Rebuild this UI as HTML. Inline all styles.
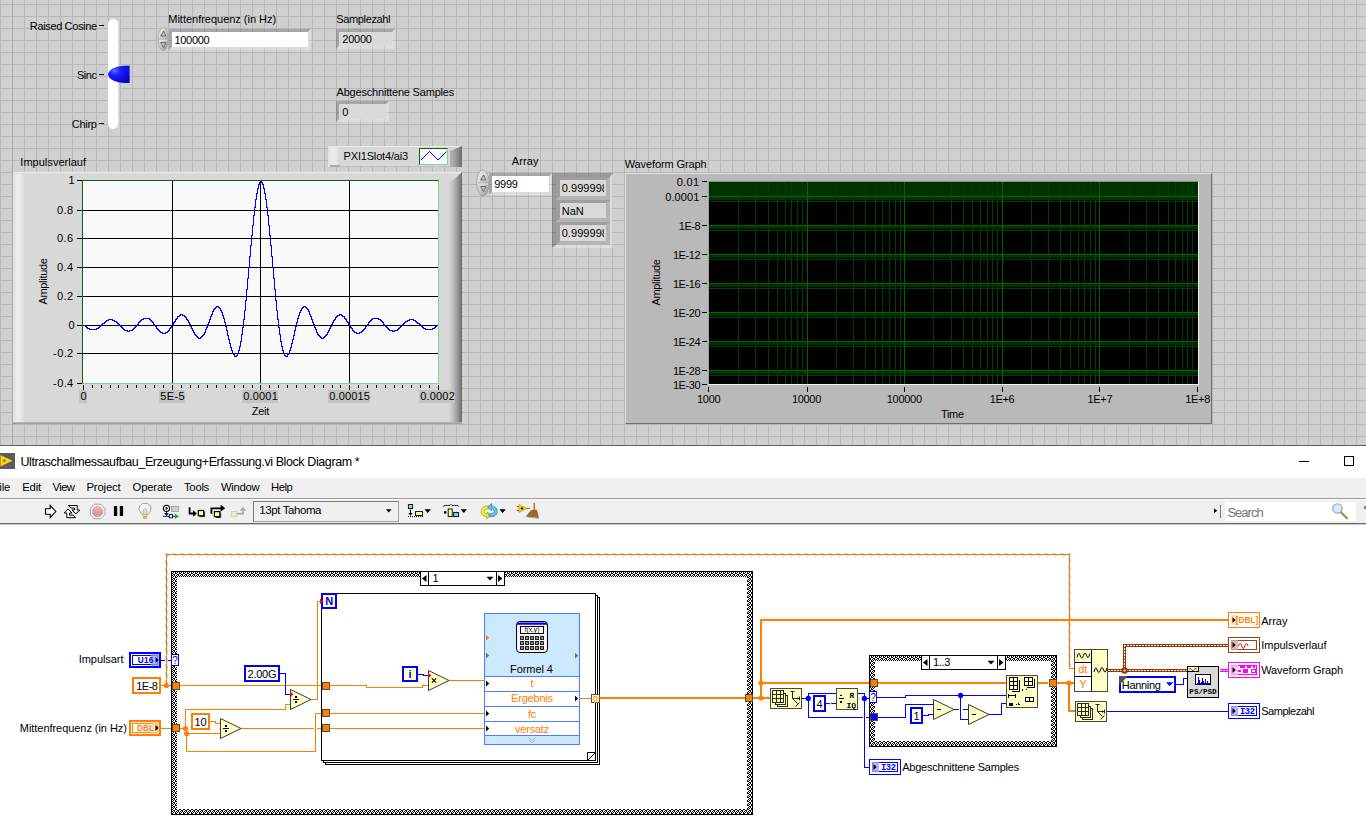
<!DOCTYPE html>
<html><head><meta charset="utf-8"><title>Ultraschallmessaufbau</title>
<style>
html,body{margin:0;padding:0;}
body{width:1366px;height:827px;overflow:hidden;position:relative;background:#fff;font-family:"Liberation Sans",sans-serif;font-size:11px;color:#000;}
#fp{position:absolute;left:0;top:0;width:1366px;height:445px;background-color:#d0d0d0;
background-image:linear-gradient(to right,#b7b7b7 1px,transparent 1px),linear-gradient(to bottom,#b7b7b7 1px,transparent 1px);
background-size:12px 12px;background-position:0 4px;overflow:hidden;}
svg{position:absolute;left:0;top:0;}
svg text{font-family:"Liberation Sans",sans-serif;}
.bev{position:absolute;box-sizing:border-box;border-style:solid;border-width:3px;border-color:rgba(0,0,0,.2) rgba(255,255,255,.28) rgba(255,255,255,.28) rgba(0,0,0,.2);}
</style></head><body>
<div id="fp">
<div style="position:absolute;left:12px;top:0px;width:1px;height:445px;background:#a8a8a8;"></div>
<div style="position:absolute;left:108px;top:19px;width:10px;height:110px;background:#fff;border-radius:5px;box-shadow:1px 0 0 #dcdcdc;"></div>
<div style="position:absolute;top:18.99px;font-size:11px;line-height:14px;color:#000;white-space:pre;letter-spacing:-0.364px;right:1269.34px;">Raised Cosine</div>
<div style="position:absolute;left:99px;top:25px;width:5px;height:1px;background:#000;"></div>
<div style="position:absolute;top:67.99px;font-size:11px;line-height:14px;color:#000;white-space:pre;letter-spacing:-0.400px;right:1269.30px;">Sinc</div>
<div style="position:absolute;left:99px;top:74px;width:5px;height:1px;background:#000;"></div>
<div style="position:absolute;top:116.99px;font-size:11px;line-height:14px;color:#000;white-space:pre;letter-spacing:-0.297px;right:1269.40px;">Chirp</div>
<div style="position:absolute;left:99px;top:123px;width:5px;height:1px;background:#000;"></div>
<div style="position:absolute;top:12.19px;font-size:11px;line-height:14px;color:#000;white-space:pre;letter-spacing:-0.018px;left:168.3px;">Mittenfrequenz (in Hz)</div>
<div class="bev" style="left:169px;top:29px;width:142px;height:21px;background:#fff;background-clip:padding-box;"></div>
<div style="position:absolute;top:32.99px;font-size:11px;line-height:14px;color:#000;white-space:pre;letter-spacing:-0.317px;left:174.5px;">100000</div>
<div style="position:absolute;top:12.49px;font-size:11px;line-height:14px;color:#000;white-space:pre;letter-spacing:-0.367px;left:336.3px;">Samplezahl</div>
<div class="bev" style="left:336px;top:29px;width:59px;height:20px;background:#d9d9d9;background-clip:padding-box;"></div>
<div style="position:absolute;top:32.39px;font-size:11px;line-height:14px;color:#000;white-space:pre;letter-spacing:-0.257px;left:342.3px;">20000</div>
<div style="position:absolute;top:85.49px;font-size:11px;line-height:14px;color:#000;white-space:pre;letter-spacing:-0.185px;left:336.5px;">Abgeschnittene Samples</div>
<div class="bev" style="left:336px;top:101px;width:53px;height:21px;background:#d9d9d9;background-clip:padding-box;"></div>
<div style="position:absolute;top:105.39px;font-size:11px;line-height:14px;color:#000;white-space:pre;letter-spacing:-0.300px;left:342.3px;">0</div>
<div style="position:absolute;top:154.69px;font-size:11px;line-height:14px;color:#000;white-space:pre;letter-spacing:0.030px;left:20.3px;">Impulsverlauf</div>
<div style="position:absolute;left:13px;top:172px;width:449px;height:252px;background:#d8d8d8;"></div>
<div style="position:absolute;left:13px;top:172px;width:12px;height:252px;background:linear-gradient(to right,#e2e2e2 0,#ececec 40%,#e6e6e6 70%,#d8d8d8 100%);"></div>
<div style="position:absolute;left:13px;top:172px;width:449px;height:2px;background:linear-gradient(to bottom,#eeeeee,#dcdcdc);"></div>
<div style="position:absolute;left:449px;top:172px;width:13px;height:252px;background:linear-gradient(to right,#d8d8d8 0,#c4c4c4 25%,#a0a0a0 60%,#6c6c6c 100%);clip-path:polygon(100% 0,100% 100%,0 100%,0 12px);"></div>
<div style="position:absolute;left:13px;top:422px;width:449px;height:2px;background:linear-gradient(to bottom,#bcbcbc,#969696);"></div>
<div style="position:absolute;left:82px;top:180px;width:357px;height:204px;background:#fafafa;box-sizing:border-box;border-top:1px solid #0a640a;border-left:1px solid #0a640a;border-right:1px solid #78dc8c;border-bottom:1px solid #78dc8c;"></div>
<div style="position:absolute;top:173.49px;font-size:11px;line-height:14px;color:#000;white-space:pre;letter-spacing:-0.300px;right:1291.70px;">1</div>
<div style="position:absolute;top:203.49px;font-size:11px;line-height:14px;color:#000;white-space:pre;letter-spacing:0.403px;right:1292.40px;">0.8</div>
<div style="position:absolute;top:231.49px;font-size:11px;line-height:14px;color:#000;white-space:pre;letter-spacing:0.403px;right:1292.40px;">0.6</div>
<div style="position:absolute;top:260.49px;font-size:11px;line-height:14px;color:#000;white-space:pre;letter-spacing:0.403px;right:1292.40px;">0.4</div>
<div style="position:absolute;top:289.49px;font-size:11px;line-height:14px;color:#000;white-space:pre;letter-spacing:0.403px;right:1292.40px;">0.2</div>
<div style="position:absolute;top:318.49px;font-size:11px;line-height:14px;color:#000;white-space:pre;letter-spacing:-0.300px;right:1291.70px;">0</div>
<div style="position:absolute;top:346.49px;font-size:11px;line-height:14px;color:#000;white-space:pre;letter-spacing:0.387px;right:1292.39px;">-0.2</div>
<div style="position:absolute;top:376.49px;font-size:11px;line-height:14px;color:#000;white-space:pre;letter-spacing:0.387px;right:1292.39px;">-0.4</div>
<div style="position:absolute;left:79px;top:390px;width:8px;height:13px;background:#c5c5c5;"></div>
<div style="position:absolute;top:389.39px;font-size:11px;line-height:14px;color:#000;white-space:pre;letter-spacing:-0.300px;left:-116.65px;width:400px;text-align:center;">0</div>
<div style="position:absolute;left:159px;top:390px;width:26px;height:13px;background:#c5c5c5;"></div>
<div style="position:absolute;top:389.39px;font-size:11px;line-height:14px;color:#000;white-space:pre;letter-spacing:0.391px;left:-27.30px;width:400px;text-align:center;">5E-5</div>
<div style="position:absolute;left:242px;top:390px;width:36px;height:13px;background:#c5c5c5;"></div>
<div style="position:absolute;top:389.39px;font-size:11px;line-height:14px;color:#000;white-space:pre;letter-spacing:0.193px;left:60.60px;width:400px;text-align:center;">0.0001</div>
<div style="position:absolute;left:328px;top:390px;width:42px;height:13px;background:#c5c5c5;"></div>
<div style="position:absolute;top:389.39px;font-size:11px;line-height:14px;color:#000;white-space:pre;letter-spacing:0.149px;left:149.57px;width:400px;text-align:center;">0.00015</div>
<div style="position:absolute;left:419px;top:390px;width:36px;height:13px;background:#c5c5c5;"></div>
<div style="position:absolute;top:389.39px;font-size:11px;line-height:14px;color:#000;white-space:pre;letter-spacing:0.193px;left:237.60px;width:400px;text-align:center;">0.0002</div>
<div style="position:absolute;top:404.49px;font-size:11px;line-height:14px;color:#000;white-space:pre;letter-spacing:-0.300px;left:60.35px;width:400px;text-align:center;">Zeit</div>
<div style="position:absolute;left:-57px;top:275px;width:200px;height:13px;line-height:13px;text-align:center;transform:rotate(-90deg);letter-spacing:-0.3px;">Amplitude</div>
<div style="position:absolute;left:328px;top:146px;width:134px;height:21px;background:#d8d8d8;"></div>
<div style="position:absolute;left:328px;top:146px;width:12px;height:21px;background:linear-gradient(to right,#e2e2e2 0,#ececec 40%,#e6e6e6 70%,#d8d8d8 100%);"></div>
<div style="position:absolute;left:328px;top:146px;width:134px;height:1px;background:#e8e8e8;"></div>
<div style="position:absolute;left:330px;top:165px;width:10px;height:2px;background:#a8a8a8;"></div>
<div style="position:absolute;left:450px;top:146px;width:12px;height:21px;background:linear-gradient(to right,#b4b4b4 0,#a0a0a0 40%,#6c6c6c 100%);clip-path:polygon(100% 0,100% 100%,0 100%,0 5px);"></div>
<div style="position:absolute;left:340px;top:166px;width:110px;height:1px;background:#c0c0c0;"></div>
<div style="position:absolute;top:148.79px;font-size:11px;line-height:14px;color:#000;white-space:pre;letter-spacing:-0.181px;left:343.6px;">PXI1Slot4/ai3</div>
<div style="position:absolute;left:419px;top:148px;width:29px;height:17px;background:#fafafa;box-sizing:border-box;border-top:1px solid #0a640a;border-left:1px solid #0a640a;border-right:1px solid #78dc8c;border-bottom:1px solid #78dc8c;"></div>
<div style="position:absolute;top:153.79px;font-size:11px;line-height:14px;color:#000;white-space:pre;letter-spacing:0.104px;left:511.8px;">Array</div>
<div class="bev" style="left:489px;top:173px;width:63px;height:22px;background:#fff;background-clip:padding-box;"></div>
<div style="position:absolute;top:176.99px;font-size:11px;line-height:14px;color:#000;white-space:pre;letter-spacing:-0.292px;left:494.3px;">9999</div>
<div class="bev" style="left:552px;top:173px;width:61px;height:75px;border-width:4px 3px 3px 4px;border-color:rgba(0,0,0,.26) rgba(255,255,255,.3) rgba(255,255,255,.3) rgba(0,0,0,.26);"></div>
<div style="position:absolute;left:556px;top:177px;width:54px;height:23px;box-sizing:border-box;border-style:solid;border-width:3px 4px 4px 4px;border-color:#9e9e9e #b4b4b4 #b4b4b4 #9e9e9e;background:#d9d9d9;overflow:hidden;"><span style="position:absolute;left:0;top:0;width:44px;height:16px;overflow:hidden;"><span style="position:absolute;left:1.7px;top:2.4px;line-height:13px;letter-spacing:0.05px;">0.999998</span></span></div>
<div style="position:absolute;left:556px;top:200px;width:54px;height:22px;box-sizing:border-box;border-style:solid;border-width:3px 4px 4px 4px;border-color:#9e9e9e #b4b4b4 #b4b4b4 #9e9e9e;background:#d9d9d9;overflow:hidden;"><span style="position:absolute;left:0;top:0;width:44px;height:16px;overflow:hidden;"><span style="position:absolute;left:1.7px;top:2.4px;line-height:13px;letter-spacing:0.05px;">NaN</span></span></div>
<div style="position:absolute;left:556px;top:222px;width:54px;height:23px;box-sizing:border-box;border-style:solid;border-width:3px 4px 4px 4px;border-color:#9e9e9e #b4b4b4 #b4b4b4 #9e9e9e;background:#d9d9d9;overflow:hidden;"><span style="position:absolute;left:0;top:0;width:44px;height:16px;overflow:hidden;"><span style="position:absolute;left:1.7px;top:2.4px;line-height:13px;letter-spacing:0.05px;">0.999998</span></span></div>
<div style="position:absolute;top:156.79px;font-size:11px;line-height:14px;color:#000;white-space:pre;letter-spacing:-0.110px;left:624.7px;">Waveform Graph</div>
<div style="position:absolute;left:625px;top:173px;width:587px;height:251px;background:#b9b9b9;box-sizing:border-box;border-top:1px solid #e0e0e0;border-left:1px solid #e0e0e0;border-right:1px solid #707070;border-bottom:1px solid #707070;"></div>
<div style="position:absolute;left:708px;top:181px;width:491px;height:204px;background:#000;box-sizing:border-box;border-top:1px solid #8c8c8c;border-left:1px solid #a0a0a0;border-right:1px solid #f0f0f0;border-bottom:1px solid #f0f0f0;"></div>
<div style="position:absolute;top:174.69px;font-size:11px;line-height:14px;color:#000;white-space:pre;letter-spacing:0.298px;right:666.70px;">0.01</div>
<div style="position:absolute;top:189.69px;font-size:11px;line-height:14px;color:#000;white-space:pre;letter-spacing:0.110px;right:666.51px;">0.0001</div>
<div style="position:absolute;top:218.69px;font-size:11px;line-height:14px;color:#000;white-space:pre;letter-spacing:-0.484px;right:665.92px;">1E-8</div>
<div style="position:absolute;top:247.69px;font-size:11px;line-height:14px;color:#000;white-space:pre;letter-spacing:-0.450px;right:665.95px;">1E-12</div>
<div style="position:absolute;top:276.69px;font-size:11px;line-height:14px;color:#000;white-space:pre;letter-spacing:-0.450px;right:665.95px;">1E-16</div>
<div style="position:absolute;top:305.69px;font-size:11px;line-height:14px;color:#000;white-space:pre;letter-spacing:-0.450px;right:665.95px;">1E-20</div>
<div style="position:absolute;top:334.69px;font-size:11px;line-height:14px;color:#000;white-space:pre;letter-spacing:-0.450px;right:665.95px;">1E-24</div>
<div style="position:absolute;top:363.69px;font-size:11px;line-height:14px;color:#000;white-space:pre;letter-spacing:-0.450px;right:665.95px;">1E-28</div>
<div style="position:absolute;top:377.69px;font-size:11px;line-height:14px;color:#000;white-space:pre;letter-spacing:-0.450px;right:665.95px;">1E-30</div>
<div style="position:absolute;top:392.39px;font-size:11px;line-height:14px;color:#000;white-space:pre;letter-spacing:-0.300px;left:508.65px;width:400px;text-align:center;">1000</div>
<div style="position:absolute;top:392.39px;font-size:11px;line-height:14px;color:#000;white-space:pre;letter-spacing:-0.300px;left:606.45px;width:400px;text-align:center;">10000</div>
<div style="position:absolute;top:392.39px;font-size:11px;line-height:14px;color:#000;white-space:pre;letter-spacing:-0.300px;left:704.25px;width:400px;text-align:center;">100000</div>
<div style="position:absolute;top:392.39px;font-size:11px;line-height:14px;color:#000;white-space:pre;letter-spacing:-0.300px;left:802.05px;width:400px;text-align:center;">1E+6</div>
<div style="position:absolute;top:392.39px;font-size:11px;line-height:14px;color:#000;white-space:pre;letter-spacing:-0.300px;left:899.85px;width:400px;text-align:center;">1E+7</div>
<div style="position:absolute;top:392.39px;font-size:11px;line-height:14px;color:#000;white-space:pre;letter-spacing:-0.300px;left:997.65px;width:400px;text-align:center;">1E+8</div>
<div style="position:absolute;top:406.69px;font-size:11px;line-height:14px;color:#000;white-space:pre;letter-spacing:-0.300px;left:752.35px;width:400px;text-align:center;">Time</div>
<div style="position:absolute;left:556px;top:276px;width:200px;height:13px;line-height:13px;text-align:center;transform:rotate(-90deg);letter-spacing:-0.3px;">Amplitude</div>
<svg width="1366" height="445" viewBox="0 0 1366 445">
<defs>
<radialGradient id="kg" cx="0.3" cy="0.28" r="0.95"><stop offset="0" stop-color="#5a6cff"/><stop offset="0.3" stop-color="#1c1cff"/><stop offset="1" stop-color="#0000b4"/></radialGradient>
<linearGradient id="ov" x1="0" y1="0" x2="1" y2="1"><stop offset="0" stop-color="#f2f2f2"/><stop offset="0.5" stop-color="#cdcdcd"/><stop offset="1" stop-color="#8e8e8e"/></linearGradient>
</defs>
<path d="M108 74.5 C108.6 69.5 116 65.8 125 65.8 L129.6 65.8 L129.6 82.9 L125 82.9 C116 82.9 108.6 79.5 108 74.5 Z" fill="url(#kg)"/>
<ellipse cx="163.15" cy="39.1" rx="5.15" ry="11.4" fill="url(#ov)" stroke="#9c9c9c" stroke-width="0.7"/>
<line x1="159.2" y1="39.1" x2="167.10000000000002" y2="39.1" stroke="#9a9a9a" stroke-width="1"/>
<line x1="159.2" y1="40.1" x2="167.10000000000002" y2="40.1" stroke="#ececec" stroke-width="1"/>
<path d="M160.75 36.1 L163.75 31.1 L165.75 36.1 Z" fill="#c8c8c8" stroke="#505050" stroke-width="0.8"/>
<path d="M160.75 42.6 L163.55 47.6 L165.75 42.6 Z" fill="#c8c8c8" stroke="#505050" stroke-width="0.8"/>
<g shape-rendering="crispEdges" stroke="#000" stroke-width="1" fill="none">
<line x1="77" y1="180.5" x2="82" y2="180.5"/>
<line x1="83" y1="210.5" x2="438" y2="210.5"/>
<line x1="77" y1="210.5" x2="82" y2="210.5"/>
<line x1="83" y1="238.5" x2="438" y2="238.5"/>
<line x1="77" y1="238.5" x2="82" y2="238.5"/>
<line x1="83" y1="267.5" x2="438" y2="267.5"/>
<line x1="77" y1="267.5" x2="82" y2="267.5"/>
<line x1="83" y1="296.5" x2="438" y2="296.5"/>
<line x1="77" y1="296.5" x2="82" y2="296.5"/>
<line x1="83" y1="325.5" x2="438" y2="325.5"/>
<line x1="77" y1="325.5" x2="82" y2="325.5"/>
<line x1="83" y1="353.5" x2="438" y2="353.5"/>
<line x1="77" y1="353.5" x2="82" y2="353.5"/>
<line x1="77" y1="383.5" x2="82" y2="383.5"/>
<line x1="83.5" y1="385" x2="83.5" y2="390"/>
<line x1="172.5" y1="181" x2="172.5" y2="383"/>
<line x1="172.5" y1="385" x2="172.5" y2="390"/>
<line x1="260.5" y1="181" x2="260.5" y2="383"/>
<line x1="260.5" y1="385" x2="260.5" y2="390"/>
<line x1="349.5" y1="181" x2="349.5" y2="383"/>
<line x1="349.5" y1="385" x2="349.5" y2="390"/>
<line x1="438.5" y1="385" x2="438.5" y2="390"/>
<line x1="92.5" y1="385" x2="92.5" y2="388"/>
<line x1="101.5" y1="385" x2="101.5" y2="388"/>
<line x1="110.5" y1="385" x2="110.5" y2="388"/>
<line x1="118.5" y1="385" x2="118.5" y2="388"/>
<line x1="127.5" y1="385" x2="127.5" y2="388"/>
<line x1="136.5" y1="385" x2="136.5" y2="388"/>
<line x1="145.5" y1="385" x2="145.5" y2="388"/>
<line x1="154.5" y1="385" x2="154.5" y2="388"/>
<line x1="163.5" y1="385" x2="163.5" y2="388"/>
<line x1="181.5" y1="385" x2="181.5" y2="388"/>
<line x1="190.5" y1="385" x2="190.5" y2="388"/>
<line x1="198.5" y1="385" x2="198.5" y2="388"/>
<line x1="207.5" y1="385" x2="207.5" y2="388"/>
<line x1="216.5" y1="385" x2="216.5" y2="388"/>
<line x1="225.5" y1="385" x2="225.5" y2="388"/>
<line x1="234.5" y1="385" x2="234.5" y2="388"/>
<line x1="243.5" y1="385" x2="243.5" y2="388"/>
<line x1="252.5" y1="385" x2="252.5" y2="388"/>
<line x1="269.5" y1="385" x2="269.5" y2="388"/>
<line x1="278.5" y1="385" x2="278.5" y2="388"/>
<line x1="287.5" y1="385" x2="287.5" y2="388"/>
<line x1="296.5" y1="385" x2="296.5" y2="388"/>
<line x1="305.5" y1="385" x2="305.5" y2="388"/>
<line x1="314.5" y1="385" x2="314.5" y2="388"/>
<line x1="323.5" y1="385" x2="323.5" y2="388"/>
<line x1="332.5" y1="385" x2="332.5" y2="388"/>
<line x1="340.5" y1="385" x2="340.5" y2="388"/>
<line x1="358.5" y1="385" x2="358.5" y2="388"/>
<line x1="367.5" y1="385" x2="367.5" y2="388"/>
<line x1="376.5" y1="385" x2="376.5" y2="388"/>
<line x1="385.5" y1="385" x2="385.5" y2="388"/>
<line x1="394.5" y1="385" x2="394.5" y2="388"/>
<line x1="402.5" y1="385" x2="402.5" y2="388"/>
<line x1="411.5" y1="385" x2="411.5" y2="388"/>
<line x1="420.5" y1="385" x2="420.5" y2="388"/>
<line x1="429.5" y1="385" x2="429.5" y2="388"/>
</g>
<path d="M83.5 325.5H84.5V325.5H85.5V326.5H86.5V327.5H87.5V328.5H88.5V328.5H89.5V329.5H90.5V329.5H91.5V329.5H92.5V329.5H93.5V329.5H94.5V329.5H95.5V329.5H96.5V328.5H97.5V328.5H98.5V327.5H99.5V326.5H100.5V325.5H101.5V324.5H102.5V323.5H103.5V323.5H104.5V322.5H105.5V321.5H106.5V320.5H107.5V320.5H108.5V319.5H109.5V319.5H110.5V319.5H111.5V319.5H112.5V320.5H113.5V320.5H114.5V321.5H115.5V321.5H116.5V322.5H117.5V323.5H118.5V324.5H119.5V325.5H120.5V326.5H121.5V327.5H122.5V328.5H123.5V329.5H124.5V330.5H125.5V330.5H126.5V330.5H127.5V331.5H128.5V331.5H129.5V330.5H130.5V330.5H131.5V330.5H132.5V329.5H133.5V328.5H134.5V327.5H135.5V326.5H136.5V325.5H137.5V324.5H138.5V322.5H139.5V321.5H140.5V320.5H141.5V319.5H142.5V319.5H143.5V318.5H144.5V318.5H145.5V318.5H146.5V318.5H147.5V318.5H148.5V318.5H149.5V319.5H150.5V320.5H151.5V321.5H152.5V322.5H153.5V324.5H154.5V325.5H155.5V326.5H156.5V328.5H157.5V329.5H158.5V330.5H159.5V331.5H160.5V332.5H161.5V332.5H162.5V333.5H163.5V333.5H164.5V333.5H165.5V332.5H166.5V332.5H167.5V331.5H168.5V330.5H169.5V328.5H170.5V327.5H171.5V325.5H172.5V324.5H173.5V322.5H174.5V321.5H175.5V319.5H176.5V318.5H177.5V316.5H178.5V316.5H179.5V315.5H180.5V314.5H181.5V314.5H182.5V315.5H183.5V315.5H184.5V316.5H185.5V317.5H186.5V319.5H187.5V320.5H188.5V322.5H189.5V324.5H190.5V326.5H191.5V328.5H192.5V330.5H193.5V332.5H194.5V334.5H195.5V335.5H196.5V336.5H197.5V337.5H198.5V338.5H199.5V338.5H200.5V337.5H201.5V336.5H202.5V335.5H203.5V334.5H204.5V332.5H205.5V329.5H206.5V327.5H207.5V324.5H208.5V322.5H209.5V319.5H210.5V316.5H211.5V314.5H212.5V311.5H213.5V309.5H214.5V308.5H215.5V307.5H216.5V306.5H217.5V306.5H218.5V307.5H219.5V308.5H220.5V310.5H221.5V312.5H222.5V315.5H223.5V318.5H224.5V322.5H225.5V326.5H226.5V330.5H227.5V335.5H228.5V339.5H229.5V343.5H230.5V347.5H231.5V350.5H232.5V353.5H233.5V354.5H234.5V356.5H235.5V356.5H236.5V355.5H237.5V353.5H238.5V350.5H239.5V346.5H240.5V341.5H241.5V334.5H242.5V327.5H243.5V319.5H244.5V310.5H245.5V300.5H246.5V289.5H247.5V278.5H248.5V267.5H249.5V256.5H250.5V245.5H251.5V235.5H252.5V225.5H253.5V215.5H254.5V207.5H255.5V199.5H256.5V193.5H257.5V188.5H258.5V184.5H259.5V182.5H260.5V181.5H261.5V182.5H262.5V184.5H263.5V188.5H264.5V193.5H265.5V199.5H266.5V207.5H267.5V215.5H268.5V225.5H269.5V235.5H270.5V245.5H271.5V256.5H272.5V267.5H273.5V278.5H274.5V289.5H275.5V300.5H276.5V310.5H277.5V319.5H278.5V327.5H279.5V334.5H280.5V341.5H281.5V346.5H282.5V350.5H283.5V353.5H284.5V355.5H285.5V356.5H286.5V356.5H287.5V354.5H288.5V353.5H289.5V350.5H290.5V347.5H291.5V343.5H292.5V339.5H293.5V335.5H294.5V330.5H295.5V326.5H296.5V322.5H297.5V318.5H298.5V315.5H299.5V312.5H300.5V310.5H301.5V308.5H302.5V307.5H303.5V306.5H304.5V306.5H305.5V307.5H306.5V308.5H307.5V309.5H308.5V311.5H309.5V314.5H310.5V316.5H311.5V319.5H312.5V322.5H313.5V324.5H314.5V327.5H315.5V329.5H316.5V332.5H317.5V334.5H318.5V335.5H319.5V336.5H320.5V337.5H321.5V338.5H322.5V338.5H323.5V337.5H324.5V336.5H325.5V335.5H326.5V334.5H327.5V332.5H328.5V330.5H329.5V328.5H330.5V326.5H331.5V324.5H332.5V322.5H333.5V320.5H334.5V319.5H335.5V317.5H336.5V316.5H337.5V315.5H338.5V315.5H339.5V314.5H340.5V314.5H341.5V315.5H342.5V316.5H343.5V316.5H344.5V318.5H345.5V319.5H346.5V321.5H347.5V322.5H348.5V324.5H349.5V325.5H350.5V327.5H351.5V328.5H352.5V330.5H353.5V331.5H354.5V332.5H355.5V332.5H356.5V333.5H357.5V333.5H358.5V333.5H359.5V332.5H360.5V332.5H361.5V331.5H362.5V330.5H363.5V329.5H364.5V328.5H365.5V326.5H366.5V325.5H367.5V324.5H368.5V322.5H369.5V321.5H370.5V320.5H371.5V319.5H372.5V318.5H373.5V318.5H374.5V318.5H375.5V318.5H376.5V318.5H377.5V318.5H378.5V319.5H379.5V319.5H380.5V320.5H381.5V321.5H382.5V322.5H383.5V324.5H384.5V325.5H385.5V326.5H386.5V327.5H387.5V328.5H388.5V329.5H389.5V330.5H390.5V330.5H391.5V330.5H392.5V331.5H393.5V331.5H394.5V330.5H395.5V330.5H396.5V330.5H397.5V329.5H398.5V328.5H399.5V327.5H400.5V326.5H401.5V325.5H402.5V324.5H403.5V323.5H404.5V322.5H405.5V321.5H406.5V321.5H407.5V320.5H408.5V320.5H409.5V319.5H410.5V319.5H411.5V319.5H412.5V319.5H413.5V320.5H414.5V320.5H415.5V321.5H416.5V322.5H417.5V323.5H418.5V323.5H419.5V324.5H420.5V325.5H421.5V326.5H422.5V327.5H423.5V328.5H424.5V328.5H425.5V329.5H426.5V329.5H427.5V329.5H428.5V329.5H429.5V329.5H430.5V329.5H431.5V329.5H432.5V328.5H433.5V328.5H434.5V327.5H435.5V326.5H436.5V325.5H437.5V325.5" fill="none" stroke="#0000ff" stroke-width="1" shape-rendering="crispEdges"/>
<path d="M421 160 L429.5 151.5 L438 160 L446.5 151.5" fill="none" stroke="#0000ff" stroke-width="1"/>
<ellipse cx="483.0" cy="183.0" rx="6.3" ry="13.0" fill="url(#ov)" stroke="#9c9c9c" stroke-width="0.7"/>
<line x1="477.9" y1="183.0" x2="488.1" y2="183.0" stroke="#9a9a9a" stroke-width="1"/>
<line x1="477.9" y1="184.0" x2="488.1" y2="184.0" stroke="#ececec" stroke-width="1"/>
<path d="M480.6 180.0 L483.6 175.0 L485.6 180.0 Z" fill="#c8c8c8" stroke="#505050" stroke-width="0.8"/>
<path d="M480.6 186.5 L483.4 191.5 L485.6 186.5 Z" fill="#c8c8c8" stroke="#505050" stroke-width="0.8"/>
<g shape-rendering="crispEdges" stroke-width="1" fill="none">
<rect x="709" y="182" width="489" height="14" fill="#003200" stroke="none"/>
<line x1="738.5" y1="182" x2="738.5" y2="384" stroke="#004000"/>
<line x1="755.5" y1="182" x2="755.5" y2="384" stroke="#004000"/>
<line x1="768.5" y1="182" x2="768.5" y2="384" stroke="#004000"/>
<line x1="777.5" y1="182" x2="777.5" y2="384" stroke="#004000"/>
<line x1="785.5" y1="182" x2="785.5" y2="384" stroke="#004000"/>
<line x1="791.5" y1="182" x2="791.5" y2="384" stroke="#004000"/>
<line x1="797.5" y1="182" x2="797.5" y2="384" stroke="#004000"/>
<line x1="802.5" y1="182" x2="802.5" y2="384" stroke="#004000"/>
<line x1="836.5" y1="182" x2="836.5" y2="384" stroke="#004000"/>
<line x1="853.5" y1="182" x2="853.5" y2="384" stroke="#004000"/>
<line x1="865.5" y1="182" x2="865.5" y2="384" stroke="#004000"/>
<line x1="875.5" y1="182" x2="875.5" y2="384" stroke="#004000"/>
<line x1="882.5" y1="182" x2="882.5" y2="384" stroke="#004000"/>
<line x1="889.5" y1="182" x2="889.5" y2="384" stroke="#004000"/>
<line x1="895.5" y1="182" x2="895.5" y2="384" stroke="#004000"/>
<line x1="900.5" y1="182" x2="900.5" y2="384" stroke="#004000"/>
<line x1="933.5" y1="182" x2="933.5" y2="384" stroke="#004000"/>
<line x1="951.5" y1="182" x2="951.5" y2="384" stroke="#004000"/>
<line x1="963.5" y1="182" x2="963.5" y2="384" stroke="#004000"/>
<line x1="972.5" y1="182" x2="972.5" y2="384" stroke="#004000"/>
<line x1="980.5" y1="182" x2="980.5" y2="384" stroke="#004000"/>
<line x1="987.5" y1="182" x2="987.5" y2="384" stroke="#004000"/>
<line x1="992.5" y1="182" x2="992.5" y2="384" stroke="#004000"/>
<line x1="997.5" y1="182" x2="997.5" y2="384" stroke="#004000"/>
<line x1="1031.5" y1="182" x2="1031.5" y2="384" stroke="#004000"/>
<line x1="1048.5" y1="182" x2="1048.5" y2="384" stroke="#004000"/>
<line x1="1060.5" y1="182" x2="1060.5" y2="384" stroke="#004000"/>
<line x1="1070.5" y1="182" x2="1070.5" y2="384" stroke="#004000"/>
<line x1="1078.5" y1="182" x2="1078.5" y2="384" stroke="#004000"/>
<line x1="1084.5" y1="182" x2="1084.5" y2="384" stroke="#004000"/>
<line x1="1090.5" y1="182" x2="1090.5" y2="384" stroke="#004000"/>
<line x1="1095.5" y1="182" x2="1095.5" y2="384" stroke="#004000"/>
<line x1="1129.5" y1="182" x2="1129.5" y2="384" stroke="#004000"/>
<line x1="1146.5" y1="182" x2="1146.5" y2="384" stroke="#004000"/>
<line x1="1158.5" y1="182" x2="1158.5" y2="384" stroke="#004000"/>
<line x1="1168.5" y1="182" x2="1168.5" y2="384" stroke="#004000"/>
<line x1="1175.5" y1="182" x2="1175.5" y2="384" stroke="#004000"/>
<line x1="1182.5" y1="182" x2="1182.5" y2="384" stroke="#004000"/>
<line x1="1187.5" y1="182" x2="1187.5" y2="384" stroke="#004000"/>
<line x1="1192.5" y1="182" x2="1192.5" y2="384" stroke="#004000"/>
<rect x="709" y="197" width="489" height="3" fill="#003200" stroke="none"/>
<line x1="709" y1="201.5" x2="1198" y2="201.5" stroke="#004000"/>
<rect x="709" y="226" width="489" height="3" fill="#003200" stroke="none"/>
<line x1="709" y1="230.5" x2="1198" y2="230.5" stroke="#004000"/>
<rect x="709" y="255" width="489" height="3" fill="#003200" stroke="none"/>
<line x1="709" y1="259.5" x2="1198" y2="259.5" stroke="#004000"/>
<rect x="709" y="284" width="489" height="3" fill="#003200" stroke="none"/>
<line x1="709" y1="288.5" x2="1198" y2="288.5" stroke="#004000"/>
<rect x="709" y="313" width="489" height="3" fill="#003200" stroke="none"/>
<line x1="709" y1="317.5" x2="1198" y2="317.5" stroke="#004000"/>
<rect x="709" y="342" width="489" height="3" fill="#003200" stroke="none"/>
<line x1="709" y1="346.5" x2="1198" y2="346.5" stroke="#004000"/>
<rect x="709" y="371" width="489" height="3" fill="#003200" stroke="none"/>
<line x1="709" y1="375.5" x2="1198" y2="375.5" stroke="#004000"/>
<line x1="807.5" y1="182" x2="807.5" y2="384" stroke="#006400"/>
<line x1="904.5" y1="182" x2="904.5" y2="384" stroke="#006400"/>
<line x1="1002.5" y1="182" x2="1002.5" y2="384" stroke="#006400"/>
<line x1="1099.5" y1="182" x2="1099.5" y2="384" stroke="#006400"/>
<line x1="709" y1="196.5" x2="1198" y2="196.5" stroke="#006400"/>
<line x1="709" y1="225.5" x2="1198" y2="225.5" stroke="#006400"/>
<line x1="709" y1="254.5" x2="1198" y2="254.5" stroke="#006400"/>
<line x1="709" y1="283.5" x2="1198" y2="283.5" stroke="#006400"/>
<line x1="709" y1="312.5" x2="1198" y2="312.5" stroke="#006400"/>
<line x1="709" y1="341.5" x2="1198" y2="341.5" stroke="#006400"/>
<line x1="709" y1="370.5" x2="1198" y2="370.5" stroke="#006400"/>
<line x1="702" y1="181.5" x2="707" y2="181.5" stroke="#000"/>
<line x1="702" y1="196.5" x2="707" y2="196.5" stroke="#000"/>
<line x1="702" y1="225.5" x2="707" y2="225.5" stroke="#000"/>
<line x1="702" y1="254.5" x2="707" y2="254.5" stroke="#000"/>
<line x1="702" y1="283.5" x2="707" y2="283.5" stroke="#000"/>
<line x1="702" y1="312.5" x2="707" y2="312.5" stroke="#000"/>
<line x1="702" y1="341.5" x2="707" y2="341.5" stroke="#000"/>
<line x1="702" y1="370.5" x2="707" y2="370.5" stroke="#000"/>
<line x1="702" y1="384.5" x2="707" y2="384.5" stroke="#000"/>
<line x1="708.5" y1="387" x2="708.5" y2="392" stroke="#000"/>
<line x1="807.5" y1="387" x2="807.5" y2="392" stroke="#000"/>
<line x1="904.5" y1="387" x2="904.5" y2="392" stroke="#000"/>
<line x1="1002.5" y1="387" x2="1002.5" y2="392" stroke="#000"/>
<line x1="1099.5" y1="387" x2="1099.5" y2="392" stroke="#000"/>
<line x1="1197.5" y1="387" x2="1197.5" y2="392" stroke="#000"/>
</g>
</svg>
</div>
<div style="position:absolute;left:0px;top:445px;width:1366px;height:1px;background:#5c5c5c;"></div>
<div style="position:absolute;left:0px;top:446px;width:1366px;height:32px;background:#fff;"></div>
<div style="position:absolute;left:0px;top:478px;width:1366px;height:20px;background:#f0f0f0;"></div>
<div style="position:absolute;left:0px;top:498px;width:1366px;height:1px;background:#9a9a9a;"></div>
<div style="position:absolute;left:0px;top:499px;width:1366px;height:24px;background:#f0f0f0;"></div>
<div style="position:absolute;left:0px;top:499px;width:1366px;height:1px;background:#fbfbfb;"></div>
<div style="position:absolute;left:0px;top:523px;width:1366px;height:1px;background:#6a6a6a;"></div>
<div style="position:absolute;left:0px;top:524px;width:1366px;height:1px;background:#c8c8c8;"></div>
<div style="position:absolute;left:0px;top:453px;width:15px;height:16px;background:#5b5b60;"></div>
<div style="position:absolute;top:453.67px;font-size:12.5px;line-height:16px;color:#000;white-space:pre;letter-spacing:-0.403px;left:20.4px;">Ultraschallmessaufbau_Erzeugung+Erfassung.vi Block Diagram *</div>
<div style="position:absolute;top:479.98px;font-size:11.3px;line-height:15px;color:#000;white-space:pre;letter-spacing:-0.127px;left:-7.5px;">File</div>
<div style="position:absolute;top:479.98px;font-size:11.3px;line-height:15px;color:#000;white-space:pre;letter-spacing:-0.243px;left:22.3px;">Edit</div>
<div style="position:absolute;top:479.98px;font-size:11.3px;line-height:15px;color:#000;white-space:pre;letter-spacing:-0.622px;left:52.6px;">View</div>
<div style="position:absolute;top:479.98px;font-size:11.3px;line-height:15px;color:#000;white-space:pre;letter-spacing:-0.138px;left:86.4px;">Project</div>
<div style="position:absolute;top:479.98px;font-size:11.3px;line-height:15px;color:#000;white-space:pre;letter-spacing:-0.204px;left:132.6px;">Operate</div>
<div style="position:absolute;top:479.98px;font-size:11.3px;line-height:15px;color:#000;white-space:pre;letter-spacing:-0.276px;left:184px;">Tools</div>
<div style="position:absolute;top:479.98px;font-size:11.3px;line-height:15px;color:#000;white-space:pre;letter-spacing:-0.315px;left:221px;">Window</div>
<div style="position:absolute;top:479.98px;font-size:11.3px;line-height:15px;color:#000;white-space:pre;letter-spacing:-0.485px;left:271px;">Help</div>
<div style="position:absolute;left:1299px;top:461px;width:10px;height:1px;background:#000;"></div>
<div style="position:absolute;left:1344px;top:456px;width:10px;height:10px;box-sizing:border-box;border:1px solid #000;"></div>
<div style="position:absolute;left:253px;top:501px;width:146px;height:21px;box-sizing:border-box;background:#f0f0f0;border:1px solid #7a7a7a;border-right-color:#a0a0a0;border-bottom-color:#a0a0a0;"></div>
<div style="position:absolute;top:503.32px;font-size:11.5px;line-height:15px;color:#000;white-space:pre;letter-spacing:-0.407px;left:259.3px;">13pt Tahoma</div>
<div style="position:absolute;left:1220px;top:505px;width:1px;height:13px;background:#7a7a7a;"></div>
<div style="position:absolute;left:1225px;top:502px;width:131px;height:19px;background:#fff;"></div>
<div style="position:absolute;top:504.00px;font-size:13px;line-height:17px;color:#767676;white-space:pre;letter-spacing:-0.981px;left:1227.4px;">Search</div>
<div style="position:absolute;left:1364px;top:506px;width:2px;height:3px;background:#8a8a20;"></div>
<svg width="1366" height="827" viewBox="0 0 1366 827"><path d="M0.5 455 L12.5 460.7 L0.5 466.4 Z" fill="#ffd500"/><path d="M2.6 460.7 h3.4 M4.3 459 v3.4" stroke="#6a6a8a" stroke-width="0.9" fill="none"/>
<path d="M45.5 508.8 H50.2 V505.4 L55.8 511.5 L50.2 517.6 V514.2 H45.5 Z" fill="#fff" stroke="#000" stroke-width="1.1" stroke-linejoin="miter"/>
<g fill="#fff" stroke="#000" stroke-width="1" stroke-linejoin="miter">
<path d="M68.5 505.5 H77.2 V510 H79.8 L75.9 514 L72 510 H74.5 V508 H70.8 Z"/>
<path d="M75.5 517.7 H66.8 V513 H64.2 L68.1 509 L72 513 H69.5 V515.2 H73.2 Z"/>
</g>
<defs><linearGradient id="ab" x1="0" y1="0" x2="0" y2="1"><stop offset="0" stop-color="#e6b8ba"/><stop offset="0.5" stop-color="#dba6a8"/><stop offset="0.55" stop-color="#d39a9c"/><stop offset="1" stop-color="#d6a2a4"/></linearGradient></defs>
<path d="M94.5 504.2 H100.8 L105 508.5 V514.6 L100.8 518.8 H94.5 L90.3 514.6 V508.5 Z" fill="#fafafa" stroke="#8e8e8e" stroke-width="0.8"/><circle cx="97.65" cy="511.5" r="5.7" fill="url(#ab)"/>
<rect x="113.9" y="506.1" width="3.3" height="9.9" fill="#000"/><rect x="119.8" y="506.1" width="3.3" height="9.9" fill="#000"/>
<path d="M145 503.3 C141.2 503.3 139 506 139 508.8 C139 511.4 141.6 512.6 142.2 514.6 H147.8 C148.4 512.6 151 511.4 151 508.8 C151 506 148.8 503.3 145 503.3 Z" fill="#f6f6f6" stroke="#8c8c8c" stroke-width="0.9"/>
<path d="M143.4 514 L143 509.8 C144 508.6 146 508.6 147 509.8 L146.6 514" fill="#e0e0e0" stroke="#a8a8a8" stroke-width="0.7"/>
<rect x="142.6" y="514.6" width="4.8" height="1.2" fill="#f0d060"/><rect x="142.6" y="516" width="4.8" height="1.2" fill="#d8b040"/><rect x="143.2" y="517.4" width="3.6" height="1.2" fill="#c09830"/>
<circle cx="166.5" cy="508.3" r="3.1" fill="#fff" stroke="#000" stroke-width="1.1"/><path d="M165.6 506.6 L168.2 508.3 L165.6 510 Z" fill="#000"/>
<path d="M166.5 511.4 V515.5" stroke="#000" stroke-width="1.1"/><path d="M164.2 513.2 H168.8 L166.5 515.8 Z" fill="#000"/>
<rect x="171.5" y="506.4" width="7.2" height="5" fill="#cfcfcf" stroke="#a2a2a2" stroke-width="0.9"/>
<path d="M163 516.4 H176" stroke="#1030ff" stroke-width="1.1"/><rect x="169.3" y="514.6" width="3.2" height="3.2" fill="#fff" stroke="#000" stroke-width="0.9"/>
<path d="M174.8 513.6 L179 516.3 L174.8 519 Z" fill="#10b020"/>
<path d="M189.6 507.3 V513.5 H194" fill="none" stroke="#000" stroke-width="1.8"/><path d="M193 510.3 L197 513.5 L193 516.7 Z" fill="#000"/><rect x="198.3" y="510.5" width="5.4" height="5.2" fill="#ffffa0" stroke="#000" stroke-width="1.2"/><path d="M199.5 516.6 H204.6 V511.5" fill="none" stroke="#000" stroke-width="0.8"/>
<path d="M211.4 513.8 V508.3 H221.5" fill="none" stroke="#000" stroke-width="1.8"/><path d="M220.6 504.8 L225.2 508.3 L220.6 511.8 Z" fill="#000"/><rect x="214.4" y="511.6" width="5.4" height="5" fill="#ffffa0" stroke="#000" stroke-width="1.2"/><path d="M215.5 517.5 H220.7 V512.6" fill="none" stroke="#000" stroke-width="0.8"/>
<rect x="231.4" y="511.5" width="5.2" height="5" fill="#f0f0c8" stroke="#d0d0b4" stroke-width="1"/><path d="M237.2 513.6 H243 V510.5" fill="none" stroke="#aaa" stroke-width="1.8"/><path d="M239.6 510.8 L243 506.8 L246.4 510.8 Z" fill="#aaa"/>
<path d="M386 509.3 H391.6 L388.8 512.6 Z" fill="#000"/>
<rect x="408.4" y="504.6" width="4.2" height="4" fill="#80e0f8" stroke="#000" stroke-width="0.9"/>
<path d="M410.5 509.5 V515" stroke="#000" stroke-width="1"/><path d="M408.3 513 H412.7 L410.5 515.8 Z" fill="#000"/>
<rect x="415.5" y="511.6" width="7" height="4" fill="#ffffa0" stroke="#000" stroke-width="0.9"/>
<path d="M408 516.6 H423" stroke="#000" stroke-width="1" stroke-dasharray="1 1"/>
<path d="M424.5 509.2 H430.9 L427.7 513 Z" fill="#000"/>
<path d="M443.2 506.6 C443.5 505 446 505.6 450 505.4 L451 504.4 L452 505.4 C456 505.6 458.5 505 458.8 506.6" fill="none" stroke="#000" stroke-width="0.9"/>
<rect x="444" y="511.2" width="2.4" height="2.4" fill="#000"/>
<rect x="448.2" y="509" width="4" height="7.6" fill="#ffffa0" stroke="#000" stroke-width="0.9"/>
<rect x="453.6" y="512.4" width="5" height="4.2" fill="#60d8f8" stroke="#000" stroke-width="0.9"/>
<path d="M460.6 509.2 H467 L463.8 513 Z" fill="#000"/>
<path d="M489.5 506.2 C484 505 481.2 508.5 481.2 511.5 C481.2 515 484.5 517 487 516.6 V518.6 L491 515.3 L487 512 V514 C485.5 514 484.2 513 484.2 511.5 C484.2 509.5 486 508.4 489.5 509 Z" fill="#f0e838" stroke="#b0a800" stroke-width="0.8"/>
<path d="M489 516.5 C494.5 517.7 497.2 514.3 497.2 511.2 C497.2 507.8 494 505.6 491.5 506 V503.6 L487.6 507.2 L491.5 510.6 V508.6 C493 508.6 494.2 509.7 494.2 511.2 C494.2 513.2 492.5 514.2 489 513.7 Z" fill="#68c0e0" stroke="#2888b0" stroke-width="0.8"/>
<path d="M499.4 509.2 H505.8 L502.6 513 Z" fill="#000"/>
<path d="M519 504.5 L527 508.4 L519 512.3 Z" fill="#ffe000" stroke="#c09000" stroke-width="0.7"/>
<path d="M516.8 506.6 H519" stroke="#f02020" stroke-width="1"/><path d="M516.8 510.4 H519" stroke="#2030f0" stroke-width="1"/><path d="M520.6 508.4 h2.8 M522 507 v2.8" stroke="#000" stroke-width="0.9"/>
<path d="M527 508.4 H529.6" stroke="#f02020" stroke-width="1"/>
<path d="M534.3 503 V511" stroke="#a87820" stroke-width="1.5"/>
<path d="M531 510.6 L536.6 510 L538.4 517.6 L526.4 516.4 Z" fill="#a06830" stroke="#704818" stroke-width="0.6"/><path d="M527 517 L538.8 518.4" stroke="#b0b0b0" stroke-width="1"/>
<path d="M1214 508.5 L1217.3 510.7 L1214 512.9 Z" fill="#000"/>
<circle cx="1337.5" cy="508.5" r="4.6" fill="#d8ecfa" stroke="#8cb4d8" stroke-width="1.4"/>
<path d="M1341 512.3 L1347 518.3" stroke="#c08040" stroke-width="2.2" stroke-linecap="round"/></svg>
<svg width="1366" height="827" viewBox="0 0 1366 827" shape-rendering="crispEdges">
<defs><pattern id="chk" width="4" height="4" patternUnits="userSpaceOnUse"><rect width="4" height="4" fill="#fff"/><path d="M1 0h1v1h-1zM3 0h1v2h-1zM0 1h1v1h-1zM1 2h2v1h-2zM0 3h1v1h-1zM2 3h1v1h-1z" fill="#000"/></pattern></defs>
<polyline points="166.5,685.5 166.5,554.5 1069.5,554.5 1069.5,668.5 1074.5,668.5" fill="none" stroke="#ff8000" stroke-width="1" stroke-linecap="square" />
<polyline points="165.5,683.5 165.5,553.5 1070.5,553.5 1070.5,667.5" fill="none" stroke="#c6d4e2" stroke-width="1" stroke-dasharray="4 4"/>
<polyline points="167.5,683.5 167.5,555.5 1068.5,555.5 1068.5,667.5" fill="none" stroke="#c6d4e2" stroke-width="1" stroke-dasharray="4 4" stroke-dashoffset="2"/>
<text x="78.7" y="663.4" font-size="11" fill="#000" letter-spacing="-0.048" shape-rendering="auto">Impulsart</text>
<rect x="130.0" y="653.0" width="30" height="14" fill="#fff" stroke="#0000ff" stroke-width="2" />
<rect x="132.5" y="655.5" width="25" height="9" fill="#fff" stroke="#0000ff" stroke-width="1" />
<rect x="151" y="654" width="8" height="12" fill="#9c9cff" opacity="0.75"/>
<path d="M155.5 657v6l3.2 -3z" fill="#000" shape-rendering="auto"/>
<text x="145.6" y="663.1" font-size="8.2" fill="#0000ff" text-anchor="middle" font-weight="bold" letter-spacing="0.200" shape-rendering="auto">U16</text>
<polyline points="161.5,660.5 164.5,660.5" fill="none" stroke="#0000ff" stroke-width="1" stroke-linecap="square" />
<polyline points="168.5,660.5 171.5,660.5" fill="none" stroke="#0000ff" stroke-width="1" stroke-linecap="square" />
<text x="19.8" y="731.5" font-size="11" fill="#000" letter-spacing="-0.050" shape-rendering="auto">Mittenfrequenz (in Hz)</text>
<rect x="130.0" y="721.0" width="30" height="14" fill="#fff" stroke="#ff8000" stroke-width="2" />
<rect x="132.5" y="723.5" width="25" height="9" fill="#fff" stroke="#ff8000" stroke-width="1" />
<rect x="151" y="722" width="8" height="12" fill="#ffd0a0" opacity="0.75"/>
<path d="M155.5 725v6l3.2 -3z" fill="#000" shape-rendering="auto"/>
<text x="145.6" y="731.1" font-size="8.2" fill="#ff8000" text-anchor="middle" font-weight="bold" letter-spacing="0.200" shape-rendering="auto">DBL</text>
<rect x="133.0" y="678.0" width="27" height="15" fill="#fff" stroke="#ff8000" stroke-width="2" />
<text x="136.2" y="689.6" font-size="11" fill="#000" letter-spacing="-0.484" shape-rendering="auto">1E-8</text>
<polyline points="161.5,685.5 172.5,685.5" fill="none" stroke="#ff8000" stroke-width="1" stroke-linecap="square" />
<polyline points="161.5,728.5 172.5,728.5" fill="none" stroke="#ff8000" stroke-width="1" stroke-linecap="square" />
<path d="M171 571H753V815H171Z M177 577V809H747V577Z" fill="url(#chk)" fill-rule="evenodd"/>
<rect x="171.5" y="571.5" width="581" height="243" fill="none" stroke="#000" stroke-width="1" />
<rect x="420.5" y="571.5" width="84" height="14" fill="#fff" stroke="#000" stroke-width="1" />
<polyline points="428.5,571.5 428.5,585.5" fill="none" stroke="#000" stroke-width="1" stroke-linecap="square" />
<polyline points="496.5,571.5 496.5,585.5" fill="none" stroke="#000" stroke-width="1" stroke-linecap="square" />
<path d="M426.5 575.0V582.0L422 578.5Z" fill="#000" shape-rendering="auto"/>
<path d="M498 575.0V582.0L502.5 578.5Z" fill="#000" shape-rendering="auto"/>
<path d="M486.5 576.7H493.5L490 580.5Z" fill="#000" shape-rendering="auto"/>
<text x="432.5" y="582.4" font-size="11" fill="#000" letter-spacing="-0.300" shape-rendering="auto">1</text>
<rect x="171.5" y="654.5" width="7" height="11" fill="#ffffd8" stroke="#0000ff" stroke-width="1" />
<text x="175" y="664" font-size="10" fill="#0000ff" text-anchor="middle" shape-rendering="auto">?</text>
<circle cx="166.3" cy="685.5" r="2.6" fill="#ff8000" shape-rendering="auto"/>
<rect x="172.5" y="682.5" width="7" height="7" fill="#ff8000" stroke="#54503a" stroke-width="1" />
<rect x="172.5" y="724.5" width="7" height="7" fill="#ff8000" stroke="#54503a" stroke-width="1" />
<polyline points="180.5,685.5 321.5,685.5" fill="none" stroke="#ff8000" stroke-width="1" stroke-linecap="square" />
<polyline points="180.5,728.5 185.5,728.5" fill="none" stroke="#ff8000" stroke-width="1" stroke-linecap="square" />
<polyline points="185.5,728.5 185.5,709.5 285.5,709.5 285.5,704.5 291.5,704.5" fill="none" stroke="#ff8000" stroke-width="1" stroke-linecap="square" />
<polyline points="186.5,728.5 186.5,733.5 220.5,733.5" fill="none" stroke="#ff8000" stroke-width="1" stroke-linecap="square" />
<polyline points="186.5,733.5 186.5,751.5 315.5,751.5 315.5,713.5 321.5,713.5" fill="none" stroke="#ff8000" stroke-width="1" stroke-linecap="square" />
<circle cx="185.5" cy="728.5" r="2.6" fill="#ff8000" shape-rendering="auto"/>
<circle cx="186.6" cy="733.5" r="2.6" fill="#ff8000" shape-rendering="auto"/>
<rect x="192.0" y="714.0" width="17" height="15" fill="#fff" stroke="#ff8000" stroke-width="2" />
<text x="194.5" y="725.6" font-size="11" fill="#000" letter-spacing="-0.217" shape-rendering="auto">10</text>
<polyline points="210.5,721.5 215.5,721.5 215.5,723.5 220.5,723.5" fill="none" stroke="#ff8000" stroke-width="1" stroke-linecap="square" />
<path d="M220.5 718.5L241 728.5L220.5 738.5Z" fill="#ffffc8" stroke="#3c3c28" stroke-width="1" shape-rendering="auto"/>
<path d="M223 728.5h6" stroke="#000" stroke-width="1" /><rect x="225.4" y="725.1" width="1.3" height="1.5" fill="#000"/><rect x="225.4" y="730.4" width="1.3" height="1.5" fill="#000"/>
<polyline points="241.5,728.5 313.5,728.5" fill="none" stroke="#ff8000" stroke-width="1" stroke-linecap="square" />
<polyline points="317.5,728.5 321.5,728.5" fill="none" stroke="#ff8000" stroke-width="1" stroke-linecap="square" />
<rect x="245.0" y="666.0" width="34" height="15" fill="#fff" stroke="#0000ff" stroke-width="2" />
<text x="247.5" y="677.6" font-size="11" fill="#000" letter-spacing="-0.233" shape-rendering="auto">2.00G</text>
<polyline points="280.5,673.5 285.5,673.5 285.5,694.5 290.5,694.5" fill="none" stroke="#0000ff" stroke-width="1" stroke-linecap="square" />
<path d="M290.5 689.5L311 699.5L290.5 709.5Z" fill="#ffffc8" stroke="#3c3c28" stroke-width="1" shape-rendering="auto"/>
<path d="M293 699.5h6" stroke="#000" stroke-width="1" /><rect x="295.4" y="696.1" width="1.3" height="1.5" fill="#000"/><rect x="295.4" y="701.4" width="1.3" height="1.5" fill="#000"/>
<path d="M290 691.5l3.5 2.8l-3.5 2.8z" fill="#ff0000" shape-rendering="auto"/>
<polyline points="311.5,699.5 317.5,699.5 317.5,601.5 321.5,601.5" fill="none" stroke="#ff8000" stroke-width="1" stroke-linecap="square" />
<rect x="325.5" y="597.5" width="274" height="167" fill="#fff" stroke="#000" stroke-width="1" />
<rect x="323.5" y="595.5" width="274" height="167" fill="#fff" stroke="#000" stroke-width="1" />
<rect x="321.5" y="593.5" width="274" height="167" fill="#fff" stroke="#000" stroke-width="1" />
<path d="M587.5 760.5V752.5H595.5Z" fill="#fff" stroke="#000" stroke-width="1" shape-rendering="auto"/>
<rect x="322.0" y="594.0" width="14" height="14" fill="#ffffc8" stroke="#0000ff" stroke-width="2" />
<text x="329.2" y="605.3" font-size="11" fill="#0000ff" text-anchor="middle" font-weight="bold" shape-rendering="auto">N</text>
<path d="M320 598.5l3.5 2.8l-3.5 2.8z" fill="#ff0000" shape-rendering="auto"/>
<rect x="322.5" y="682.5" width="7" height="7" fill="#ff8000" stroke="#54503a" stroke-width="1" />
<rect x="322.5" y="709.5" width="7" height="7" fill="#ff8000" stroke="#54503a" stroke-width="1" />
<rect x="322.5" y="724.5" width="7" height="7" fill="#ff8000" stroke="#54503a" stroke-width="1" />
<polyline points="330.5,685.5 366.5,685.5 366.5,687.5 422.5,687.5 422.5,685.5 428.5,685.5" fill="none" stroke="#ff8000" stroke-width="1" stroke-linecap="square" />
<polyline points="330.5,713.5 484.5,713.5" fill="none" stroke="#ff8000" stroke-width="1" stroke-linecap="square" />
<polyline points="330.5,728.5 484.5,728.5" fill="none" stroke="#ff8000" stroke-width="1" stroke-linecap="square" />
<rect x="403.0" y="667.0" width="14" height="14" fill="#ffffc8" stroke="#0000ff" stroke-width="2" />
<text x="410" y="678.3" font-size="11" fill="#0000ff" text-anchor="middle" font-weight="bold" shape-rendering="auto">i</text>
<polyline points="418.5,674.5 423.5,674.5 423.5,675.5 428.5,675.5" fill="none" stroke="#0000ff" stroke-width="1" stroke-linecap="square" />
<path d="M428.5 670.5L449 680.5L428.5 690.5Z" fill="#ffffc8" stroke="#3c3c28" stroke-width="1" shape-rendering="auto"/>
<path d="M431.8 678.3l4.4 4.4M431.8 682.7l4.4 -4.4" stroke="#000" stroke-width="1.1" shape-rendering="auto"/>
<path d="M428 672.7l3.5 2.8l-3.5 2.8z" fill="#ff0000" shape-rendering="auto"/>
<polyline points="449.5,680.5 484.5,680.5" fill="none" stroke="#ff8000" stroke-width="1" stroke-linecap="square" />
<rect x="484.5" y="613.5" width="95" height="131" fill="#cde9ff" stroke="#4d7dff" stroke-width="1" />
<rect x="484.5" y="676.5" width="95" height="59" fill="#fff" stroke="#4d7dff" stroke-width="1" />
<polyline points="484.5,691.5 579.5,691.5" fill="none" stroke="#4d7dff" stroke-width="1" stroke-linecap="square" />
<polyline points="484.5,706.5 579.5,706.5" fill="none" stroke="#4d7dff" stroke-width="1" stroke-linecap="square" />
<polyline points="484.5,721.5 579.5,721.5" fill="none" stroke="#4d7dff" stroke-width="1" stroke-linecap="square" />
<text x="532" y="687.4" font-size="11" fill="#ff8000" text-anchor="middle" letter-spacing="-0.200" shape-rendering="auto">t</text>
<text x="532" y="702.4" font-size="11" fill="#ff8000" text-anchor="middle" letter-spacing="-0.200" shape-rendering="auto">Ergebnis</text>
<text x="532" y="717.6" font-size="11" fill="#ff8000" text-anchor="middle" letter-spacing="-0.200" shape-rendering="auto">fc</text>
<text x="532" y="732.5" font-size="11" fill="#ff8000" text-anchor="middle" letter-spacing="-0.200" shape-rendering="auto">versatz</text>
<path d="M486 680.5v6l3.2 -3z" fill="#000" shape-rendering="auto"/>
<path d="M486 710.5v6l3.2 -3z" fill="#000" shape-rendering="auto"/>
<path d="M486 725.5v6l3.2 -3z" fill="#000" shape-rendering="auto"/>
<path d="M575 695.5v6l3.2 -3z" fill="#000" shape-rendering="auto"/>
<path d="M486 634.7v6l3.2 -3z" fill="#ff8000" shape-rendering="auto"/>
<path d="M486 652.5v6l3.2 -3z" fill="#7c7c10" shape-rendering="auto"/>
<path d="M575 652.8v6l3.2 -3z" fill="#7c7c10" shape-rendering="auto"/>
<path d="M528.5 737.5l3.5 2.6l3.5 -2.6M528.5 740l3.5 2.6l3.5 -2.6" fill="none" stroke="#8aa8c8" stroke-width="0.8" shape-rendering="auto"/>
<text x="531.5" y="672.9" font-size="11" fill="#000" text-anchor="middle" letter-spacing="-0.074" shape-rendering="auto">Formel 4</text>
<g shape-rendering="auto"><rect x="516.5" y="621.5" width="31" height="31" rx="3.5" fill="#f4f4f4" stroke="#000"/>
<path d="M518 622.5h28a2 2 0 0 1 1 1.5v0.8h-30v-0.8a2 2 0 0 1 1-1.5z" fill="#0000ff"/>
<rect x="520.5" y="626.5" width="23" height="7" fill="#fff" stroke="#000"/></g>
<text x="532" y="632.4" font-size="6.6" fill="#000" text-anchor="middle" style='font-family:"Liberation Sans",sans-serif' shape-rendering="auto">f(x,y)</text>
<rect x="520.5" y="636.5" width="3" height="3" fill="#8c8c8c" stroke="#222" stroke-width="1" />
<rect x="525.5" y="636.5" width="3" height="3" fill="#8c8c8c" stroke="#222" stroke-width="1" />
<rect x="530.5" y="636.5" width="3" height="3" fill="#8c8c8c" stroke="#222" stroke-width="1" />
<rect x="535.5" y="636.5" width="3" height="3" fill="#8c8c8c" stroke="#222" stroke-width="1" />
<rect x="540.5" y="636.5" width="3" height="3" fill="#8c8c8c" stroke="#222" stroke-width="1" />
<rect x="520.5" y="641.5" width="3" height="3" fill="#8c8c8c" stroke="#222" stroke-width="1" />
<rect x="525.5" y="641.5" width="3" height="3" fill="#8c8c8c" stroke="#222" stroke-width="1" />
<rect x="530.5" y="641.5" width="3" height="3" fill="#8c8c8c" stroke="#222" stroke-width="1" />
<rect x="535.5" y="641.5" width="3" height="3" fill="#8c8c8c" stroke="#222" stroke-width="1" />
<rect x="540.5" y="641.5" width="3" height="3" fill="#8c8c8c" stroke="#222" stroke-width="1" />
<rect x="520.5" y="646.5" width="3" height="3" fill="#8c8c8c" stroke="#222" stroke-width="1" />
<rect x="525.5" y="646.5" width="3" height="3" fill="#8c8c8c" stroke="#222" stroke-width="1" />
<rect x="530.5" y="646.5" width="3" height="3" fill="#8c8c8c" stroke="#222" stroke-width="1" />
<rect x="535.5" y="646.5" width="3" height="3" fill="#8c8c8c" stroke="#222" stroke-width="1" />
<rect x="540.5" y="646.5" width="3" height="3" fill="#8c8c8c" stroke="#222" stroke-width="1" />
<polyline points="580.5,698.5 591.5,698.5" fill="none" stroke="#ff8000" stroke-width="1" stroke-linecap="square" />
<rect x="591.5" y="694.5" width="8" height="8" fill="#ffffd0" stroke="#54503a" stroke-width="1" />
<text x="595.5" y="701" font-size="6.5" fill="#ff8000" text-anchor="middle" font-weight="bold" shape-rendering="auto">[]</text>
<polyline points="600.0,698.0 745.0,698.0" fill="none" stroke="#ff8000" stroke-width="2" />
<rect x="745.5" y="694.5" width="7" height="7" fill="#ff8000" stroke="#54503a" stroke-width="1" />
<polyline points="753.0,698.0 770.0,698.0" fill="none" stroke="#ff8000" stroke-width="2" />
<polyline points="761.0,698.0 761.0,620.0 1228.0,620.0" fill="none" stroke="#ff8000" stroke-width="2" />
<polyline points="761.0,683.0 869.0,683.0" fill="none" stroke="#ff8000" stroke-width="2" />
<circle cx="761" cy="698" r="2.6" fill="#ff8000" shape-rendering="auto"/>
<circle cx="761" cy="683" r="2.6" fill="#ff8000" shape-rendering="auto"/>
<rect x="770.5" y="688.5" width="31" height="20" fill="#ffffc8" stroke="#4b4b32" stroke-width="1" />
<g stroke="#2a2a1a" stroke-width="1" fill="none">
<path d="M777.5 704.5v2h10v-11h-2 M775.5 702.5v2h10v-11h-2"/>
<rect x="772.5" y="690.5" width="11" height="12" fill="#ffffc8"/>
<path d="M776.5 690.5v12M780.5 690.5v12M772.5 694.5h11M772.5 698.5h11"/>
<path d="M790.5 691.5h4M792.5 691.5v7l5 5M792.5 698.5h7M799.5 696.5v4M797.5 697.5v2M799.5 702.5l-4 4" shape-rendering="auto"/>
</g>
<polyline points="802.5,698.5 808.5,698.5" fill="none" stroke="#0000ff" stroke-width="1" stroke-linecap="square" />
<polyline points="808.5,698.5 808.5,693.5 836.5,693.5" fill="none" stroke="#0000ff" stroke-width="1" stroke-linecap="square" />
<polyline points="808.5,698.5 808.5,717.5 862.5,717.5" fill="none" stroke="#0000ff" stroke-width="1" stroke-linecap="square" />
<polyline points="866.5,717.5 869.5,717.5" fill="none" stroke="#0000ff" stroke-width="1" stroke-linecap="square" />
<circle cx="808.3" cy="698.4" r="2.6" fill="#0000ff" shape-rendering="auto"/>
<rect x="814.0" y="696.0" width="11" height="15" fill="#fff" stroke="#0000ff" stroke-width="2" />
<text x="816.4" y="707.6" font-size="11" fill="#000" letter-spacing="-0.300" shape-rendering="auto">4</text>
<polyline points="826.5,703.5 836.5,703.5" fill="none" stroke="#0000ff" stroke-width="1" stroke-linecap="square" />
<path d="M829.5 704.5l2 -2" stroke="#b0b0b0" stroke-width="1.2" shape-rendering="auto"/>
<rect x="836.5" y="688.5" width="21" height="21" fill="#ffffc8" stroke="#4b4b32" stroke-width="1" />
<path d="M838.5 698.5h5" stroke="#000"/><rect x="840.3" y="694.6" width="1.5" height="1.6" fill="#000"/><rect x="840.3" y="700.9" width="1.5" height="1.6" fill="#000"/>
<text x="852" y="698" font-size="8" fill="#000" text-anchor="middle" font-weight="bold" style='font-family:"Liberation Mono",monospace' shape-rendering="auto">R</text>
<text x="851.3" y="707.5" font-size="8" fill="#000" text-anchor="middle" font-weight="bold" style='font-family:"Liberation Mono",monospace' shape-rendering="auto">IQ</text>
<polyline points="858.5,693.5 864.5,693.5 864.5,767.5 869.5,767.5" fill="none" stroke="#0000ff" stroke-width="1" stroke-linecap="square" />
<polyline points="864.5,698.5 869.5,698.5" fill="none" stroke="#0000ff" stroke-width="1" stroke-linecap="square" />
<circle cx="864.4" cy="698.4" r="2.6" fill="#0000ff" shape-rendering="auto"/>
<path d="M869 655H1057V747H869Z M875 661V741H1051V661Z" fill="url(#chk)" fill-rule="evenodd"/>
<rect x="869.5" y="655.5" width="187" height="91" fill="none" stroke="#000" stroke-width="1" />
<rect x="921.5" y="655.5" width="84" height="14" fill="#fff" stroke="#000" stroke-width="1" />
<polyline points="929.5,655.5 929.5,669.5" fill="none" stroke="#000" stroke-width="1" stroke-linecap="square" />
<polyline points="997.5,655.5 997.5,669.5" fill="none" stroke="#000" stroke-width="1" stroke-linecap="square" />
<path d="M927.5 659.0V666.0L923 662.5Z" fill="#000" shape-rendering="auto"/>
<path d="M999 659.0V666.0L1003.5 662.5Z" fill="#000" shape-rendering="auto"/>
<path d="M987.5 660.7H994.5L991 664.5Z" fill="#000" shape-rendering="auto"/>
<text x="933" y="666.4" font-size="11" fill="#000" letter-spacing="-0.300" shape-rendering="auto">1..3</text>
<rect x="870.5" y="679.5" width="7" height="7" fill="#ff8000" stroke="#54503a" stroke-width="1" />
<rect x="870.5" y="713.5" width="7" height="7" fill="#0000ff" stroke="#54503a" stroke-width="1" />
<rect x="869.5" y="691.5" width="7" height="11" fill="#ffffd8" stroke="#0000ff" stroke-width="1" />
<text x="873" y="701" font-size="10" fill="#0000ff" text-anchor="middle" shape-rendering="auto">?</text>
<polyline points="878.0,683.0 1006.0,683.0" fill="none" stroke="#ff8000" stroke-width="2" />
<polyline points="1038.0,683.0 1048.0,683.0" fill="none" stroke="#ff8000" stroke-width="2" />
<polyline points="877.5,697.5 905.5,697.5 905.5,695.5 1006.5,695.5" fill="none" stroke="#0000ff" stroke-width="1" stroke-linecap="square" />
<polyline points="878.5,717.5 905.5,717.5 905.5,704.5 933.5,704.5" fill="none" stroke="#0000ff" stroke-width="1" stroke-linecap="square" />
<rect x="911.0" y="708.0" width="11" height="15" fill="#fff" stroke="#0000ff" stroke-width="2" />
<text x="913.6" y="719.6" font-size="11" fill="#000" letter-spacing="-0.300" shape-rendering="auto">1</text>
<polyline points="923.5,715.5 928.5,715.5 928.5,714.5 933.5,714.5" fill="none" stroke="#0000ff" stroke-width="1" stroke-linecap="square" />
<path d="M933.5 699.5L954 709.5L933.5 719.5Z" fill="#ffffc8" stroke="#3c3c28" stroke-width="1" shape-rendering="auto"/>
<path d="M937 709.5h4" stroke="#000" stroke-width="1"/>
<polyline points="954.5,709.5 958.5,709.5" fill="none" stroke="#0000ff" stroke-width="1" stroke-linecap="square" />
<polyline points="963.5,709.5 968.5,709.5" fill="none" stroke="#0000ff" stroke-width="1" stroke-linecap="square" />
<polyline points="960.5,695.5 960.5,719.5 968.5,719.5" fill="none" stroke="#0000ff" stroke-width="1" stroke-linecap="square" />
<circle cx="960.6" cy="695.4" r="2.6" fill="#0000ff" shape-rendering="auto"/>
<path d="M968.5 704.5L989 714.5L968.5 724.5Z" fill="#ffffc8" stroke="#3c3c28" stroke-width="1" shape-rendering="auto"/>
<path d="M972 714.5h4" stroke="#000" stroke-width="1"/>
<polyline points="989.5,714.5 1001.5,714.5 1001.5,703.5 1006.5,703.5" fill="none" stroke="#0000ff" stroke-width="1" stroke-linecap="square" />
<rect x="1006.5" y="675.5" width="31" height="32" fill="#ffffc8" stroke="#4b4b32" stroke-width="1" />
<g stroke="#000" stroke-width="1" fill="none">
<path d="M1012.5 690.5v1h7v-11h-1"/><rect x="1009.5" y="677.5" width="8" height="12" fill="#ffffc8"/><path d="M1013.5 677.5v12M1009.5 681.5h8M1009.5 685.5h8"/>
<path d="M1027.5 686.5v1h7v-8h-1"/><rect x="1024.5" y="677.5" width="8" height="8" fill="#ffffc8"/><path d="M1028.5 677.5v8M1024.5 681.5h8"/>
<path d="M1008.5 693.5v4M1015.5 693.5v4M1008.5 695.5h7"/>
<rect x="1025.5" y="697.5" width="8" height="4"/><path d="M1029.5 697.5v4"/>
<rect x="1009" y="703" width="4" height="3" fill="#000" stroke="none"/><path d="M1015.5 704.5h1M1017.5 704.5h2M1018.5 702.5v2"/>
<rect x="1022" y="689" width="1" height="2" fill="#000" stroke="none"/><rect x="1026" y="689" width="1" height="1" fill="#000" stroke="none"/>
</g>
<rect x="1049.5" y="679.5" width="7" height="7" fill="#ff8000" stroke="#54503a" stroke-width="1" />
<polyline points="1057.0,683.0 1074.0,683.0" fill="none" stroke="#ff8000" stroke-width="2" />
<polyline points="1069.0,683.0 1069.0,711.0 1075.0,711.0" fill="none" stroke="#ff8000" stroke-width="2" />
<circle cx="1069" cy="683" r="2.6" fill="#ff8000" shape-rendering="auto"/>
<rect x="869.5" y="759.5" width="31" height="15" fill="#fff" stroke="#0000ff" stroke-width="1" />
<rect x="872.5" y="762.5" width="25" height="9" fill="#fff" stroke="#0000ff" stroke-width="1" />
<rect x="872" y="762" width="7" height="10" fill="#a0a0ff" opacity="0.8"/>
<path d="M873.5 764v6l3.2 -3z" fill="#000" shape-rendering="auto"/>
<text x="888.2" y="769.6" font-size="8.8" fill="#0000ff" text-anchor="middle" font-weight="bold" style='font-family:"Liberation Mono",monospace' letter-spacing="-0.400" shape-rendering="auto">I32</text>
<text x="902.2" y="770.5" font-size="11" fill="#000" letter-spacing="-0.222" shape-rendering="auto">Abgeschnittene Samples</text>
<rect x="1074.5" y="649.5" width="33" height="42" fill="#ffffc8" stroke="#4b4b32" stroke-width="1" />
<rect x="1075" y="662" width="16" height="29" fill="#fff" />
<polyline points="1091.5,650.5 1091.5,690.5" fill="none" stroke="#000" stroke-width="1" stroke-linecap="square" />
<polyline points="1075.5,662.5 1090.5,662.5" fill="none" stroke="#000" stroke-width="1" stroke-linecap="square" />
<polyline points="1075.5,676.5 1090.5,676.5" fill="none" stroke="#000" stroke-width="1" stroke-linecap="square" />
<path d="M1077 657.5q1.6-7 3.2-2t3.2 0t3.2 0t3.2-2" fill="none" stroke="#000" stroke-width="1" shape-rendering="auto"/>
<path d="M1094 672q1.6-7 3.2-2t3.2 0t3.2 0t3.2-2" fill="none" stroke="#000" stroke-width="1" shape-rendering="auto"/>
<text x="1082.8" y="673" font-size="11" fill="#ff8000" text-anchor="middle" shape-rendering="auto">dt</text>
<text x="1082.8" y="687.6" font-size="11" fill="#ff8000" text-anchor="middle" shape-rendering="auto">Y</text>
<rect x="1075.5" y="701.5" width="31" height="20" fill="#ffffc8" stroke="#4b4b32" stroke-width="1" />
<g stroke="#2a2a1a" stroke-width="1" fill="none">
<path d="M1082.5 717.5v2h10v-11h-2 M1080.5 715.5v2h10v-11h-2"/>
<rect x="1077.5" y="703.5" width="11" height="12" fill="#ffffc8"/>
<path d="M1081.5 703.5v12M1085.5 703.5v12M1077.5 707.5h11M1077.5 711.5h11"/>
<path d="M1095.5 704.5h4M1097.5 704.5v7l5 5M1097.5 711.5h7M1104.5 709.5v4M1102.5 710.5v2M1104.5 715.5l-4 4" shape-rendering="auto"/>
</g>
<polyline points="1107.5,711.5 1228.5,711.5" fill="none" stroke="#0000ff" stroke-width="1" stroke-linecap="square" />
<polyline points="1107.5,670.5 1187.5,670.5" fill="none" stroke="#993300" stroke-width="3" />
<polyline points="1107.5,670.5 1187.5,670.5" fill="none" stroke="#fff" stroke-width="1" stroke-dasharray="2 1"/>
<polyline points="1124.5,670.5 1124.5,645.5 1228.5,645.5" fill="none" stroke="#993300" stroke-width="3" />
<polyline points="1124.5,670.5 1124.5,645.5 1228.5,645.5" fill="none" stroke="#fff" stroke-width="1" stroke-dasharray="2 1"/>
<circle cx="1124.5" cy="670.5" r="3.2" fill="#993300" shape-rendering="auto"/><circle cx="1124.5" cy="670.5" r="1.1" fill="#fff" shape-rendering="auto"/>
<rect x="1120.0" y="677.0" width="55" height="15" fill="#fff" stroke="#0000ff" stroke-width="2" />
<path d="M1119 676h9l-9 9z" fill="#505050" shape-rendering="auto"/>
<text x="1121.8" y="688.9" font-size="11" fill="#000" letter-spacing="-0.310" shape-rendering="auto">Hanning</text>
<path d="M1166 682.3h7.2l-3.6 4z" fill="#0000ff" shape-rendering="auto"/>
<polyline points="1176.5,684.5 1183.5,684.5 1183.5,678.5 1187.5,678.5" fill="none" stroke="#0000ff" stroke-width="1" stroke-linecap="square" />
<rect x="1187.5" y="666.5" width="31" height="31" fill="#d9d9d9" stroke="#000" stroke-width="1" />
<rect x="1187.5" y="666.5" width="11" height="5" fill="#ffffc8" stroke="#000" stroke-width="1" />
<path d="M1189 669.5q1.3-2.6 2.6 0t2.6 0t2.6 0" fill="none" stroke="#000" stroke-width="0.8" shape-rendering="auto"/>
<rect x="1195.5" y="674.5" width="15" height="10" fill="#fff" stroke="#000" stroke-width="1" />
<path d="M1196.5 683.5h13M1198.5 683v-6M1199.5 683v-3M1202.5 683v-5M1203.5 683v-2M1205.5 683v-4M1207.5 683v-2M1201.5 683v-1" stroke="#0000ff" stroke-width="1" fill="none"/>
<text x="1203" y="694.2" font-size="7.6" fill="#000" text-anchor="middle" font-weight="bold" style='font-family:"Liberation Mono",monospace' shape-rendering="auto">PS/PSD</text>
<polyline points="1219.5,670.5 1228.5,670.5" fill="none" stroke="#ff00ff" stroke-width="3" />
<polyline points="1219.5,670.5 1228.5,670.5" fill="none" stroke="#fff" stroke-width="1" stroke-dasharray="2 1"/>
<rect x="1228.5" y="612.5" width="31" height="15" fill="#fff" stroke="#ff8000" stroke-width="1" />
<rect x="1231" y="615" width="7" height="10" fill="#ffd8b0" opacity="0.8"/>
<path d="M1232.5 617v6l3.2 -3z" fill="#000" shape-rendering="auto"/>
<text x="1247" y="623.2" font-size="8.2" fill="#ff8000" text-anchor="middle" font-weight="bold" shape-rendering="auto">[DBL]</text>
<text x="1261.2" y="624.5" font-size="11" fill="#000" letter-spacing="0.004" shape-rendering="auto">Array</text>
<rect x="1228.5" y="637.5" width="31" height="15" fill="#fff" stroke="#a04018" stroke-width="1" />
<rect x="1231.5" y="640.5" width="25" height="9" fill="#fff" stroke="#a04018" stroke-width="1" />
<rect x="1231" y="640" width="7" height="10" fill="#d8a8a0" opacity="0.8"/>
<path d="M1232.5 642v6l3.2 -3z" fill="#000" shape-rendering="auto"/>
<path d="M1238.5 646q1.6-5 3.2 0t3.2 0t3.2 0" fill="none" stroke="#c00000" stroke-width="0.9" shape-rendering="auto"/>
<text x="1261.2" y="648.5" font-size="11" fill="#000" letter-spacing="-0.008" shape-rendering="auto">Impulsverlauf</text>
<rect x="1228.5" y="662.5" width="31" height="15" fill="#fff" stroke="#ff00ff" stroke-width="1" />
<rect x="1231.5" y="665.5" width="25" height="9" fill="#fff" stroke="#ff00ff" stroke-width="1" />
<rect x="1231" y="665" width="7" height="10" fill="#ffb0ff" opacity="0.8"/>
<path d="M1232.5 667v6l3.2 -3z" fill="#000" shape-rendering="auto"/>
<g fill="#ff00ff"><rect x="1240" y="666" width="5" height="1.5"/><rect x="1247" y="666" width="4" height="1.5"/><rect x="1253" y="666" width="2" height="1.5"/><rect x="1238" y="669.5" width="3" height="2.5"/><rect x="1243" y="669" width="5" height="3.5"/><rect x="1251" y="669" width="4" height="3.5" fill="none" stroke="#ff00ff"/></g>
<text x="1261.2" y="673.6" font-size="11" fill="#000" letter-spacing="-0.110" shape-rendering="auto">Waveform Graph</text>
<rect x="1228.5" y="703.5" width="31" height="15" fill="#fff" stroke="#0000ff" stroke-width="1" />
<rect x="1231.5" y="706.5" width="25" height="9" fill="#fff" stroke="#0000ff" stroke-width="1" />
<rect x="1231" y="706" width="7" height="10" fill="#a0a0ff" opacity="0.8"/>
<path d="M1232.5 708v6l3.2 -3z" fill="#000" shape-rendering="auto"/>
<text x="1247.2" y="713.6" font-size="8.8" fill="#0000ff" text-anchor="middle" font-weight="bold" style='font-family:"Liberation Mono",monospace' letter-spacing="-0.400" shape-rendering="auto">I32</text>
<text x="1261.2" y="714.5" font-size="11" fill="#000" letter-spacing="-0.467" shape-rendering="auto">Samplezahl</text>
</svg>
</body></html>
